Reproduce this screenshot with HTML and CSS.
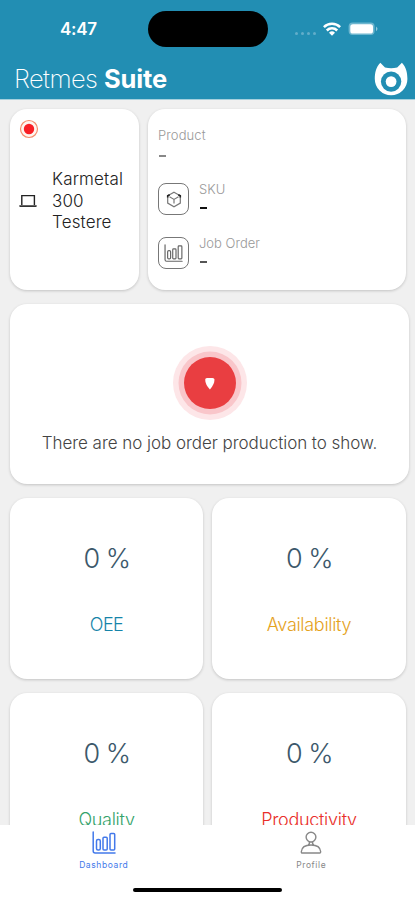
FILE: index.html
```html
<!DOCTYPE html>
<html lang="en">
<head>
<meta charset="utf-8">
<meta name="viewport" content="width=device-width, initial-scale=1">
<title>Retmes Suite</title>
<link rel="stylesheet" href="styles.css">
</head>
<body>
<svg width="0" height="0" class="defs">
  <symbol id="chart" viewBox="0 0 24 23"><g fill="none" stroke="currentColor" stroke-width="1.500" stroke-linejoin="round" stroke-linecap="round"><path d="M1.200 1v19q0 2 2 2H23"/><rect x="4.500" y="8.500" width="3.800" height="10.500" rx="1.500"/><rect x="11" y="6.200" width="4.200" height="12.800" rx="1"/><rect x="18" y="2.500" width="4.700" height="16.500" rx="1"/></g></symbol>
</svg>
<div class="screen">
  <header class="header">
    <div class="status">
      <div class="time">4:47</div>
      <div class="island"></div>
      <div class="signals">
        <div class="dots"><i></i><i></i><i></i><i></i></div>
        <svg class="wifi" viewBox="0 0 18 14"><g fill="none" stroke="#fff" stroke-width="2.5"><path d="M.9 5.2a11.5 11.5 0 0 1 16.2 0"/><path d="M3.8 8.5a7.4 7.4 0 0 1 10.4 0"/></g><path d="M9 13.8 6 10.8a4.3 4.3 0 0 1 6 0z" fill="#fff"/></svg>
        <svg class="battery" viewBox="0 0 31 14"><rect x=".6" y=".6" width="26" height="12.5" rx="4" fill="#6db6cf"/><rect x="2.3" y="2.2" width="22.7" height="9.4" rx="2.6" fill="#fff"/><path d="M28 4.5q3 2.3 0 4.8z" fill="#8fc6da"/></svg>
      </div>
    </div>
    <div class="brand">
      <h1><span>Retmes</span> <b>Suite</b></h1>
      <svg class="logo" viewBox="0 0 34 34"><path d="M6.300.8C2 5 .8 11 .8 17a16.300 16.300 0 0 0 32.600 0C33.400 11 32.200 5 27.900.8L23.200 5.500Q17.100 6.800 11 5.500z" fill="#fff"/><circle cx="17.100" cy="19.600" r="10.200" fill="#228eb3"/><circle cx="17.100" cy="19.600" r="5.400" fill="#fff"/></svg>
    </div>
  </header>
  <main class="content">
    <section class="row top">
      <div class="card machine">
        <svg class="record" viewBox="0 0 20 20"><circle cx="10" cy="10" r="8.500" fill="#fff5ef" stroke="#f58b6b" stroke-width="1.200"/><circle cx="10" cy="10" r="5.200" fill="#f91f25"/></svg>
        <div class="machine-row">
          <svg class="laptop" viewBox="0 0 18 14"><path d="M2.800 11V1.600h12.600V11" fill="none" stroke="#222" stroke-width="1.400"/><path d="M.3 11.200h17.400v1.100q0 .7-.8.7H1.100q-.8 0-.8-.7z" fill="#333"/></svg>
          <p>Karmetal<br>300<br>Testere</p>
        </div>
      </div>
      <div class="card job">
        <div class="product"><label>Product</label><i class="dash light"></i></div>
        <div class="item">
          <div class="box"><svg width="16" height="17" viewBox="0 0 16 17"><path d="M8 1.200 14.300 4.800v7.300L8 15.700 1.700 12.100V4.800zM3.500 5.800 8 8.400l4.500-2.600M8 8.400v4" fill="none" stroke="#777" stroke-width="1.200"/><path d="M1.700 6.500V4.800l2-1.100M12.300 3.700l2 1.100v1.700" fill="none" stroke="#222" stroke-width="1.600"/></svg></div>
          <div><label>SKU</label><i class="dash dark"></i></div>
        </div>
        <div class="item">
          <div class="box"><svg width="19" height="18"><use href="#chart"/></svg></div>
          <div><label class="order">Job Order</label><i class="dash"></i></div>
        </div>
      </div>
    </section>
    <section class="card empty">
      <svg class="pulse" viewBox="0 0 76 76"><circle cx="38" cy="38" r="37" fill="#fde6e8"/><circle cx="38" cy="38" r="31.500" fill="#f9c6ca"/><circle cx="38" cy="38" r="26" fill="#e93e41"/><path d="M33.200 34.800Q33.200 33 35 33h5.500q2 0 2 1.800 0 4.600-4.600 9.700-4.700-5-4.700-9.700z" fill="#fff"/></svg>
      <p>There are no job order production to show.</p>
    </section>
    <section class="metrics">
      <div class="card metric"><strong>0 %</strong><span class="oee">OEE</span></div>
      <div class="card metric"><strong>0 %</strong><span class="availability">Availability</span></div>
      <div class="card metric"><strong>0 %</strong><span class="quality">Quality</span></div>
      <div class="card metric"><strong>0 %</strong><span class="productivity">Productivity</span></div>
    </section>
  </main>
  <footer class="footer">
    <nav>
      <a class="tab active"><svg width="24" height="23"><use href="#chart"/></svg><span>Dashboard</span></a>
      <a class="tab"><svg width="22" height="23" viewBox="0 0 22 23"><path d="M11 1.200a4.900 4.900 0 1 1 0 9.800 4.900 4.900 0 0 1 0-9.800zM1.300 20.800Q1.800 14 11 14t9.700 6.800q0 1.200-1 1.200H2.300q-1 0-1-1.200zM9.300 11q.6 2-1.300 3M12.700 11q-.6 2 1.300 3" fill="none" stroke="currentColor" stroke-width="1.400"/></svg><span>Profile</span></a>
    </nav>
    <div class="home"></div>
  </footer>
</div>
</body>
</html>
```

FILE: styles.css
```css
* { box-sizing: border-box; }
body, h1, p { margin: 0; }
body { font-family: Inter, "Liberation Sans", sans-serif; font-weight: 300; background: #f0f0f0; }
svg { display: block; flex: none; }
.defs { position: absolute; }
.screen { height: 900px; display: flex; flex-direction: column; overflow: hidden; }
.header { flex: none; height: 100px; background: #228eb3; color: #fff; border-bottom: 1px solid #a5d0dd; }
.status { height: 58px; display: grid; grid-template-columns: 148px 120px 147px; align-items: center; }
.time { padding-left: 60px; font-size: 17px; line-height: 20px; font-weight: 600; letter-spacing: -.3px; }
.island { height: 36px; border-radius: 18px; background: #000; }
.signals { display: flex; align-items: center; padding-left: 27px; }
.dots { display: flex; gap: 3px; padding-top: 8px; width: 28px; }
.dots i { width: 3px; height: 3px; border-radius: 50%; background: #62adca; }
.wifi { width: 18px; height: 14px; }
.battery { width: 31px; height: 14px; margin-left: 7px; }
.brand { height: 41px; padding: 0 7px 0 14px; display: flex; justify-content: space-between; align-items: center; }
h1 { font-size: 25.500px; line-height: 32px; font-weight: 200; letter-spacing: -.6px; }
h1 b { font-weight: 700; letter-spacing: -.1px; }
.logo { width: 34px; height: 34px; }
.content { flex: 1; min-height: 0; overflow: hidden; padding: 9px 6px 0 10px; }
.card { background: #fff; border-radius: 17px; box-shadow: 0 1px 3px rgba(0,0,0,.19); }
.top { display: grid; grid-template-columns: 129px 258px; gap: 9px; height: 181px; }
.machine { padding: 10px 9px 0; }
.record { width: 20px; height: 20px; }
.machine-row { display: flex; align-items: center; gap: 15px; margin-top: 30px; }
.laptop { width: 18px; height: 14px; }
.machine p { color: #222; font-size: 17px; line-height: 21.500px; letter-spacing: .15px; }
.job { padding: 18px 10px 0; }
label { display: block; color: #999; font-size: 13px; line-height: 16px; letter-spacing: .1px; }
.order { letter-spacing: 0; }
.dash { display: block; width: 7px; height: 2px; margin: 10px 0 0 1px; background: #555; }
.dash.light { background: #888; margin-top: 12px; }
.dash.dark { background: #111; }
.product { height: 54px; }
.item { height: 54px; display: flex; gap: 10px; }
.box { width: 31px; height: 32px; margin-top: 2px; border: 1px solid #777; border-radius: 8px; display: flex; align-items: center; justify-content: center; color: #666; }
.empty { height: 180px; margin-top: 14px; padding-top: 41px; }
.pulse { width: 76px; height: 76px; margin: 0 auto; }
.empty p { margin-top: 11px; text-align: center; font-size: 17px; line-height: 23px; letter-spacing: -.04px; color: #444; white-space: nowrap; }
.metrics { display: grid; grid-template-columns: 193px 194px; gap: 14px 9px; margin-top: 14px; }
.metric { height: 181px; padding-top: 44px; display: flex; flex-direction: column; align-items: center; }
.metric strong { font-size: 27px; line-height: 34px; font-weight: 300; color: #3c586b; letter-spacing: -1.600px; word-spacing: 1px; }
.metric span { margin-top: 37px; font-size: 18px; line-height: 24px; letter-spacing: -.3px; }
.metric .oee { color: #1684a9; letter-spacing: -.6px; }
.availability { color: #e5a21c; }
.quality { color: #35a36b; }
.productivity { color: #e92f29; }
.footer { flex: none; height: 75px; background: #fff; display: flex; flex-direction: column; align-items: center; }
nav { width: 100%; height: 63px; display: grid; grid-template-columns: 1fr 1fr; }
.tab { color: #888; display: flex; flex-direction: column; align-items: center; padding-top: 6px; }
.tab.active { color: #4379ea; }
.tab span { margin-top: 6px; font-size: 8.500px; line-height: 11px; font-weight: 400; letter-spacing: .6px; }
.home { width: 149px; height: 4px; border-radius: 2px; background: #000; }
```
